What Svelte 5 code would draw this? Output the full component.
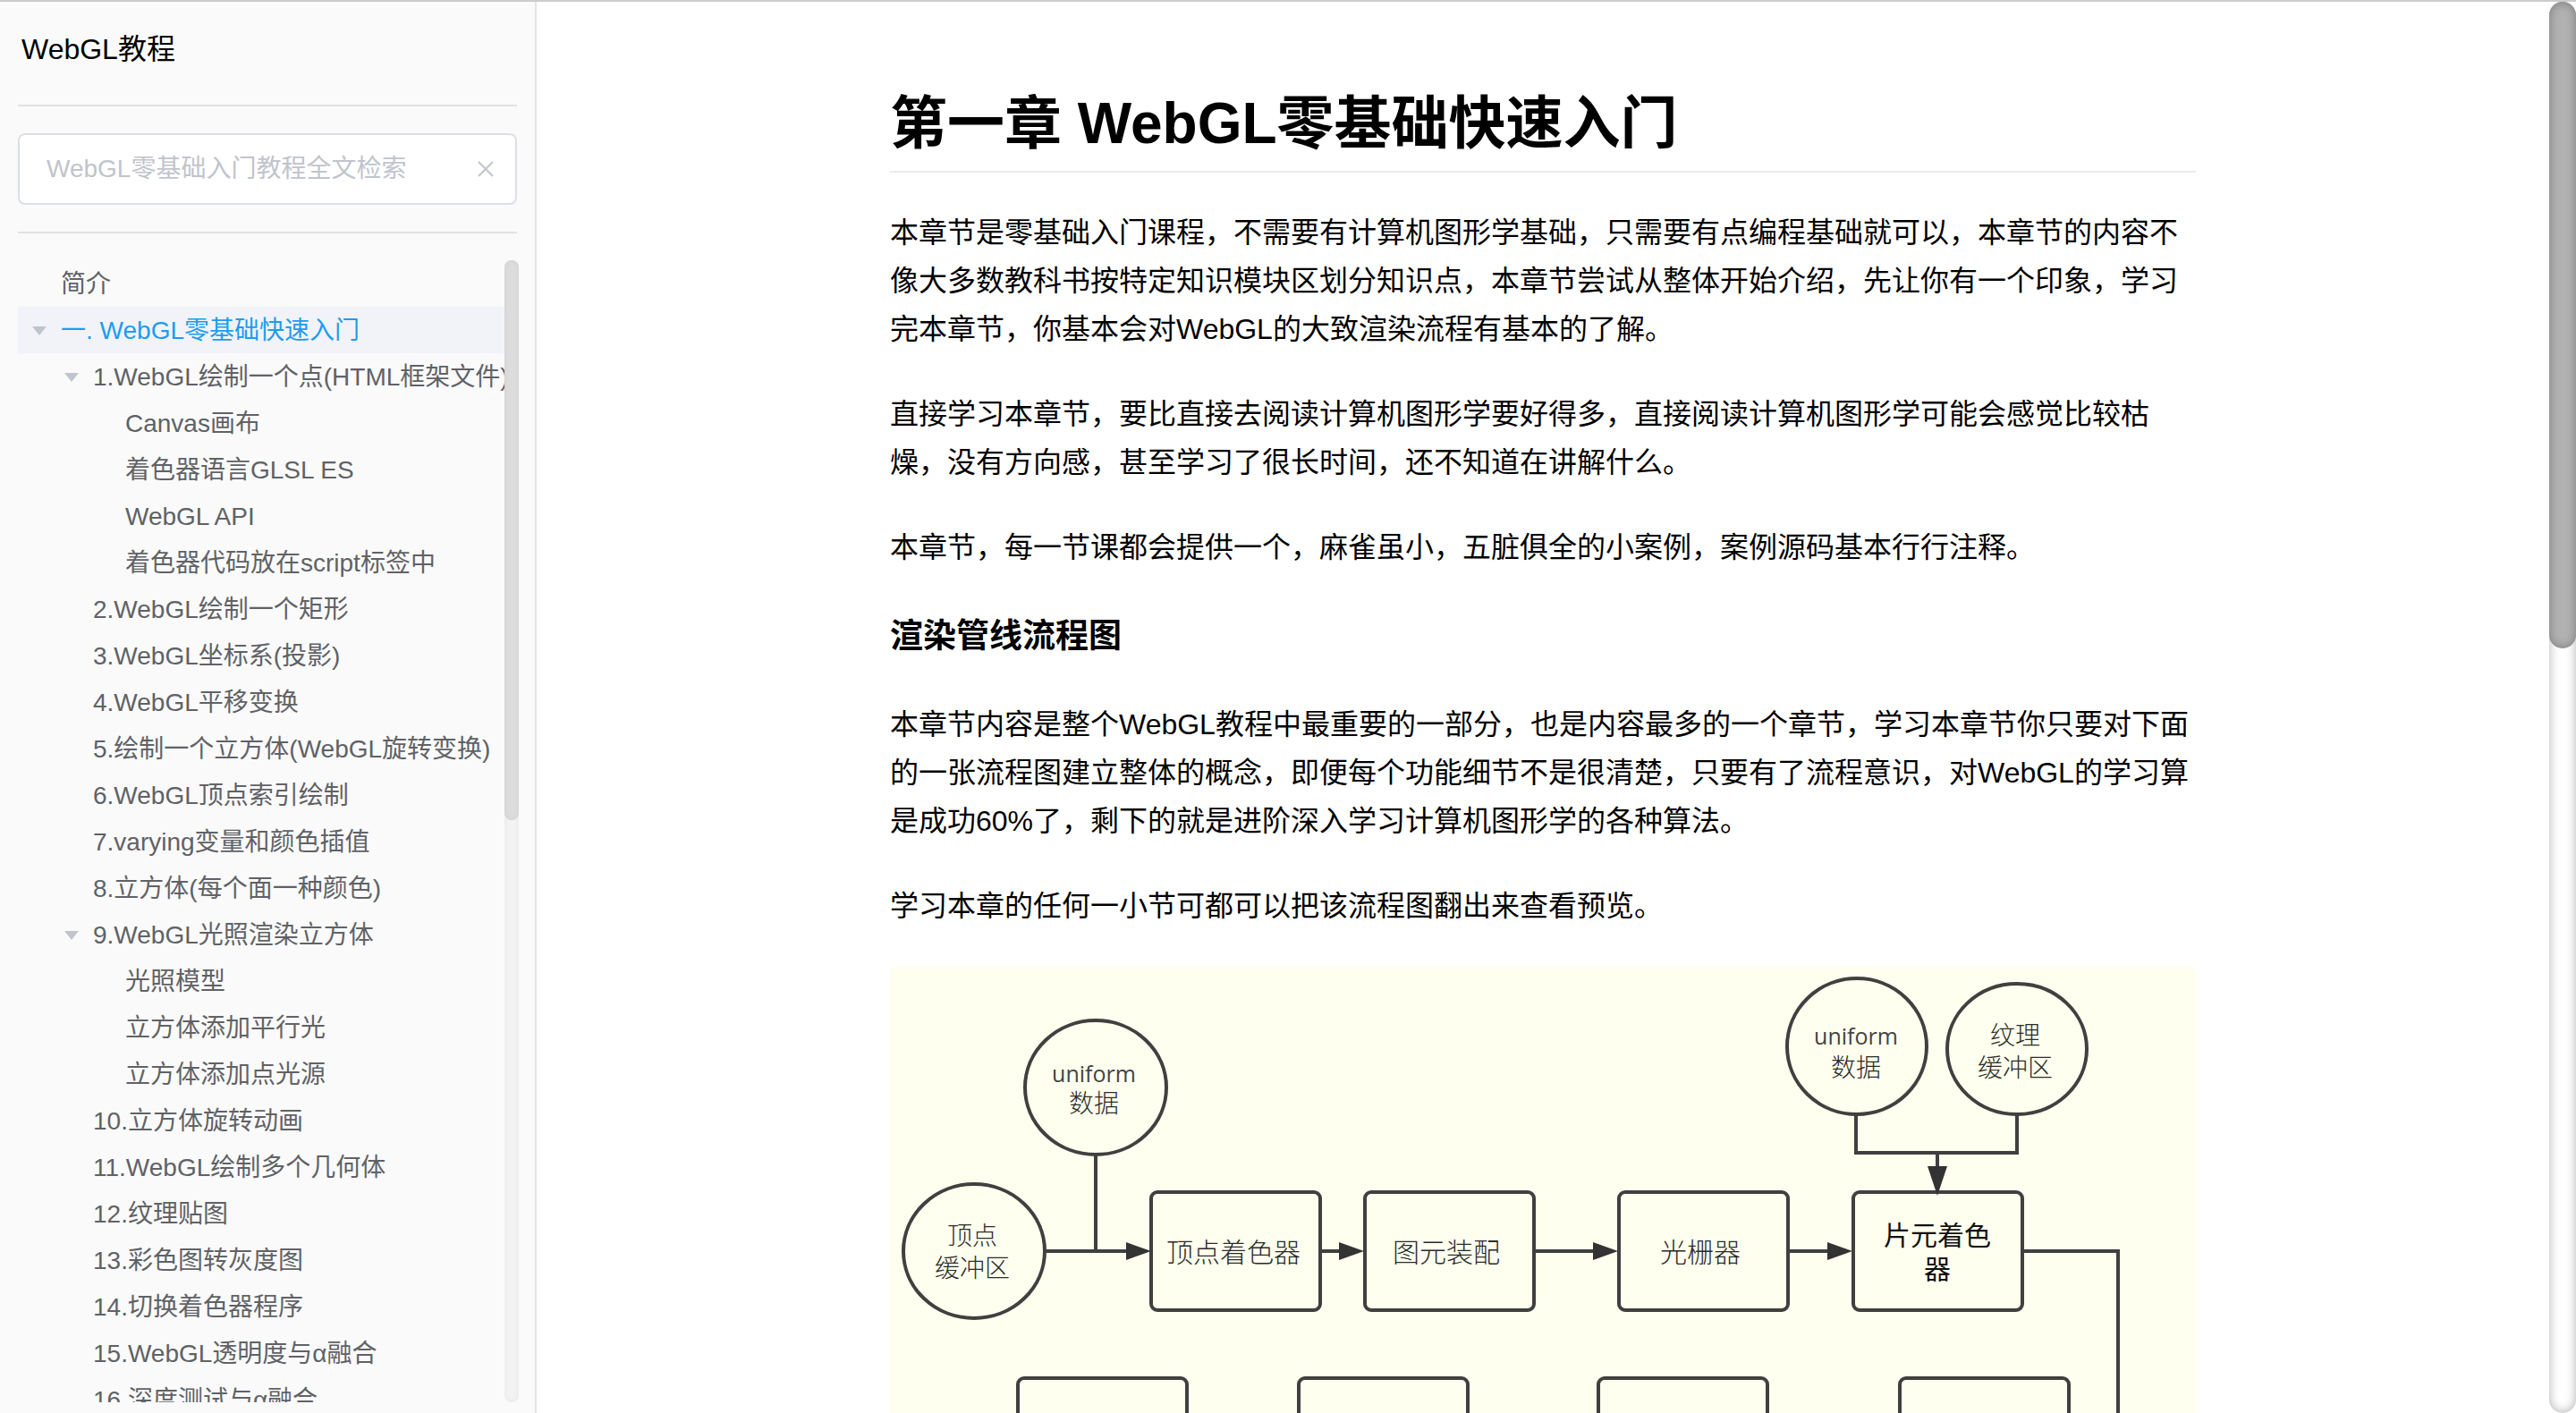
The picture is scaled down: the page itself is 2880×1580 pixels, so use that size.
<script>
  const items = [
    { text: '简介', depth: 0 },
    { text: '一. WebGL零基础快速入门', depth: 0, open: true, current: true },
    { text: '1.WebGL绘制一个点(HTML框架文件)', depth: 1, open: true },
    { text: 'Canvas画布', depth: 2 },
    { text: '着色器语言GLSL ES', depth: 2 },
    { text: 'WebGL API', depth: 2 },
    { text: '着色器代码放在script标签中', depth: 2 },
    { text: '2.WebGL绘制一个矩形', depth: 1 },
    { text: '3.WebGL坐标系(投影)', depth: 1 },
    { text: '4.WebGL平移变换', depth: 1 },
    { text: '5.绘制一个立方体(WebGL旋转变换)', depth: 1 },
    { text: '6.WebGL顶点索引绘制', depth: 1 },
    { text: '7.varying变量和颜色插值', depth: 1 },
    { text: '8.立方体(每个面一种颜色)', depth: 1 },
    { text: '9.WebGL光照渲染立方体', depth: 1, open: true },
    { text: '光照模型', depth: 2 },
    { text: '立方体添加平行光', depth: 2 },
    { text: '立方体添加点光源', depth: 2 },
    { text: '10.立方体旋转动画', depth: 1 },
    { text: '11.WebGL绘制多个几何体', depth: 1 },
    { text: '12.纹理贴图', depth: 1 },
    { text: '13.彩色图转灰度图', depth: 1 },
    { text: '14.切换着色器程序', depth: 1 },
    { text: '15.WebGL透明度与α融合', depth: 1 },
    { text: '16.深度测试与α融合', depth: 1 }
  ];

  const boxes = [
    { x: 293, y: 253 },
    { x: 532, y: 253 },
    { x: 816, y: 253 },
    { x: 1078, y: 253 },
    { x: 144, y: 461 },
    { x: 458, y: 461 },
    { x: 793, y: 461 },
    { x: 1130, y: 461 }
  ];

  let query = $state('');
</script>

<div class="page" lang="zh-CN">
  <aside class="sidebar">
    <div class="brand">WebGL教程</div>
    <div class="search">
      <input type="text" aria-label="全文检索" placeholder="WebGL零基础入门教程全文检索" bind:value={query} />
      <button class="clear" type="button" aria-label="清空" onclick={() => (query = '')}>
        <svg viewBox="0 0 18 18" width="18" height="18"><path d="M1 1 17 17M17 1 1 17" /></svg>
      </button>
    </div>
    <nav class="tree">
      <ul>
        {#each items as item}
          <li class="row depth{item.depth}" class:current={item.current}>
            {#if item.open}
              <button class="toggle" type="button" aria-label="收起" aria-expanded="true">
                <svg viewBox="0 0 16 10" width="16" height="10"><path d="M0 0H16L8 10Z" /></svg>
              </button>
            {:else}
              <span class="toggle"></span>
            {/if}
            <a href="#top" aria-current={item.current ? 'page' : undefined}>{item.text}</a>
          </li>
        {/each}
      </ul>
      <div class="track" aria-hidden="true"><div class="thumb"></div></div>
    </nav>
  </aside>

  <main>
    <article>
      <h1>第一章 WebGL零基础快速入门</h1>
      <p>本章节是零基础入门课程，不需要有计算机图形学基础，只需要有点编程基础就可以，本章节的内容不像大多数教科书按特定知识模块区划分知识点，本章节尝试从整体开始介绍，先让你有一个印象，学习完本章节，你基本会对WebGL的大致渲染流程有基本的了解。</p>
      <p>直接学习本章节，要比直接去阅读计算机图形学要好得多，直接阅读计算机图形学可能会感觉比较枯燥，没有方向感，甚至学习了很长时间，还不知道在讲解什么。</p>
      <p>本章节，每一节课都会提供一个，麻雀虽小，五脏俱全的小案例，案例源码基本行行注释。</p>
      <h3>渲染管线流程图</h3>
      <p>本章节内容是整个WebGL教程中最重要的一部分，也是内容最多的一个章节，学习本章节你只要对下面的一张流程图建立整体的概念，即便每个功能细节不是很清楚，只要有了流程意识，对WebGL的学习算是成功60%了，剩下的就是进阶深入学习计算机图形学的各种算法。</p>
      <p>学习本章的任何一小节可都可以把该流程图翻出来查看预览。</p>
      <svg class="diagram" viewBox="1 1 1460 660" role="img" aria-label="渲染管线流程图">
        <g class="shape">
          <ellipse cx="231" cy="136" rx="79" ry="75" />
          <ellipse cx="95" cy="319" rx="79" ry="75" />
          <ellipse cx="1082" cy="90" rx="78" ry="76" />
          <ellipse cx="1261" cy="93" rx="78" ry="73" />
          {#each boxes as box}
            <rect x={box.x} y={box.y} width="189" height="132" rx="7" />
          {/each}
          <path d="M174 319H270M231 211V319M482 319H508M721 319H790M1005 319H1052" />
          <path d="M1081 166V209H1261V166M1172 209V230M1267 319H1374V661" />
        </g>
        <g class="head">
          <path d="M265 309 293 319 265 329Z" />
          <path d="M503 309 531 319 503 329Z" />
          <path d="M787 309 815 319 787 329Z" />
          <path d="M1049 309 1077 319 1049 329Z" />
          <path d="M1161 224H1183L1172 257Z" />
        </g>
        <g class="small">
          <text x="229" y="130" class="latin">uniform</text>
          <text x="229" y="164">数据</text>
          <text x="93" y="312">顶点</text>
          <text x="93" y="348">缓冲区</text>
          <text x="1081" y="88" class="latin">uniform</text>
          <text x="1081" y="124">数据</text>
          <text x="1259" y="88">纹理</text>
          <text x="1259" y="124">缓冲区</text>
        </g>
        <g class="large">
          <text x="385" y="331">顶点着色器</text>
          <text x="623" y="331">图元装配</text>
          <text x="907" y="331">光栅器</text>
          <text x="1172" y="312" class="dark">片元着色</text>
          <text x="1172" y="350" class="dark">器</text>
        </g>
      </svg>
    </article>
  </main>
  <div class="page-track" aria-hidden="true"><div class="page-thumb"></div></div>
</div>

<style>
  :global(body) {
    background: #fff;
  }

  .page {
    box-sizing: border-box;
    display: flex;
    height: 100vh;
    overflow: hidden;
    border-top: 2px solid #ccc;
    color: #000;
    font-family: 'Liberation Sans', 'Noto Sans CJK SC', sans-serif;
    font-size: 32px;
  }

  .sidebar {
    box-sizing: border-box;
    display: flex;
    flex-direction: column;
    flex: 0 0 600px;
    padding: 0 20px 12px;
    border-right: 2px solid #e4e4e4;
    background: #fafafa;
  }

  .brand {
    padding: 29px 4px 38px;
    border-bottom: 2px solid #e2e2e2;
    line-height: 48px;
  }

  .search {
    position: relative;
    padding: 30px 0;
    border-bottom: 2px solid #e2e2e2;
  }

  .search input {
    display: block;
    box-sizing: border-box;
    width: 100%;
    height: 80px;
    padding: 0 60px 0 30px;
    border: 2px solid #dcdfe6;
    border-radius: 8px;
    background: #fff;
    color: #606266;
    font: inherit;
    font-size: 28px;
    outline: none;
  }

  .search input::placeholder {
    color: #c0c4cc;
    opacity: 1;
  }

  button {
    display: flex;
    align-items: center;
    justify-content: center;
    padding: 0;
    border: 0;
    background: none;
    cursor: pointer;
  }

  .clear {
    position: absolute;
    top: 50px;
    right: 15px;
    width: 40px;
    height: 40px;
  }

  .clear path {
    fill: none;
    stroke: #c0c4cc;
    stroke-width: 2;
  }

  .tree {
    position: relative;
    flex: 1;
    min-height: 0;
    margin: 30px -2px 0 0;
    overflow: hidden;
  }

  ul {
    margin: 0;
    padding: 0;
    list-style: none;
  }

  .row {
    display: flex;
    height: 52px;
    color: #606266;
    font-size: 28px;
    line-height: 54px;
    white-space: nowrap;
  }

  .depth1 {
    padding-left: 36px;
  }

  .depth2 {
    padding-left: 72px;
  }

  .current {
    background: #f1f3f8;
    color: #1e9cef;
  }

  .row a {
    color: inherit;
    text-decoration: none;
  }

  .toggle {
    flex: 0 0 48px;
    padding-top: 2px;
  }

  .toggle path {
    fill: #c0c4cc;
  }

  .track {
    position: absolute;
    top: 0;
    right: 0;
    bottom: 0;
    width: 16px;
    border-radius: 8px;
    background: #f3f3f3;
    box-shadow: inset 0 0 6px #e8e8e8;
  }

  .thumb {
    height: 49%;
    border-radius: 8px;
    background: #dcdcdc;
    box-shadow: inset 0 0 5px #d0d0d0;
  }

  main {
    flex: 1;
    min-width: 0;
    overflow: hidden;
  }

  article {
    max-width: 1460px;
    margin: 0 auto;
    padding-top: 88px;
  }

  h1 {
    margin: 0 0 40px;
    padding-bottom: 5px;
    border-bottom: 2px solid #eaecef;
    font-size: 64px;
    line-height: 96px;
  }

  h3 {
    margin: 0 0 40px;
    padding-top: 1px;
    font-size: 37px;
    line-height: 62px;
  }

  p {
    margin: 0 0 41px;
    line-height: 54px;
  }

  .diagram {
    display: block;
    width: 100%;
    background: #feffee;
  }

  .shape {
    fill: none;
    stroke: #404040;
    stroke-width: 4;
  }

  .head {
    fill: #333;
  }

  .diagram text {
    fill: #2b2b2b;
    font-family: 'Noto Sans CJK SC', sans-serif;
    font-weight: 300;
    text-anchor: middle;
  }

  .small text {
    font-size: 28px;
  }

  .diagram .latin {
    fill: #444;
    font-family: 'Open Sans', sans-serif;
    font-size: 25px;
    font-weight: 400;
  }

  .large text {
    font-size: 30px;
  }

  .diagram .dark {
    fill: #111;
    font-weight: 400;
  }

  .page-track {
    flex: 0 0 30px;
    border-radius: 15px;
    background: #fff;
    box-shadow: inset 0 0 12px #b0b0b0;
  }

  .page-thumb {
    height: 45.8%;
    border-radius: 15px;
    background: #b2b2b2;
    box-shadow: inset 0 0 12px #7c7c7c;
  }
</style>
